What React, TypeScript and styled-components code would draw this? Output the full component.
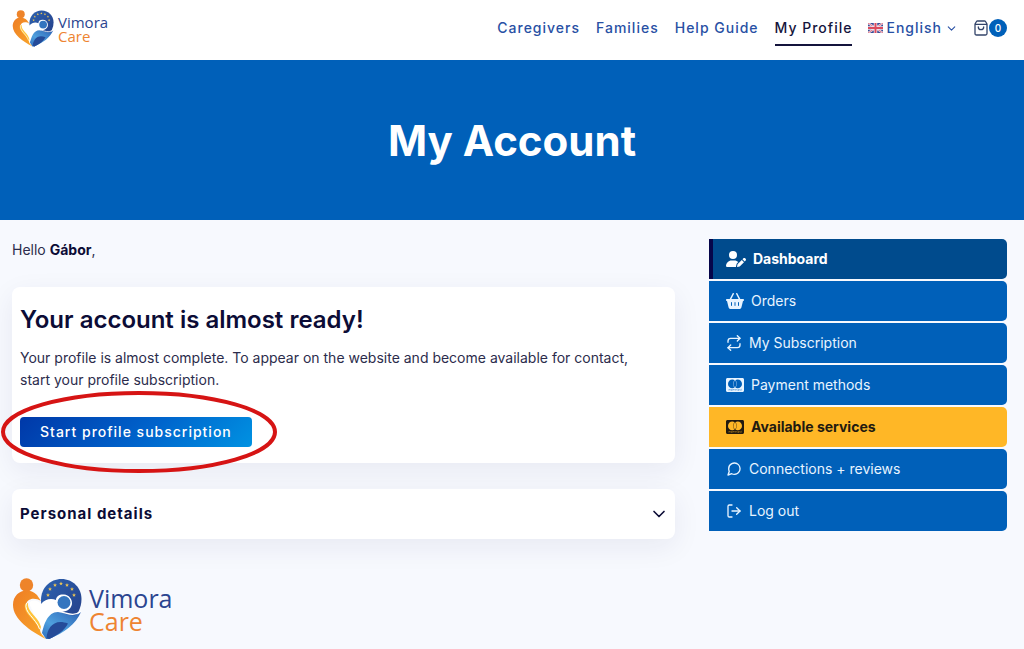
import React, { useId } from 'react';
import styled, { createGlobalStyle, css } from 'styled-components';
import { FaUserPen, FaBasketShopping, FaCcMastercard } from 'react-icons/fa6';
import { FiRepeat, FiMessageCircle, FiLogOut, FiChevronDown } from 'react-icons/fi';

const GlobalStyle = createGlobalStyle`
  *, *::before, *::after { box-sizing: border-box; }
  body {
    margin: 0;
    background: #f7f9fe;
    color: #2c2c4c;
    font-family: Inter, "Liberation Sans", sans-serif;
    font-size: 14px;
    line-height: 22px;
  }
  h1, h2, p, ul { margin: 0; padding: 0; }
  a { color: inherit; text-decoration: none; }
  button { font: inherit; border: 0; cursor: pointer; }
`;

const Header = styled.header`
  display: flex;
  align-items: center;
  justify-content: space-between;
  min-height: 60px;
  padding: 0 17px 4px 12px;
  background: #fff;
`;

const Brand = styled.a<{ $large?: boolean }>`
  display: inline-flex;
  align-items: center;
  gap: ${p => (p.$large ? 7 : 4)}px;
  font-family: "Open Sans", "Noto Sans", sans-serif;
  font-size: ${p => (p.$large ? 25 : 15)}px;
  line-height: ${p => (p.$large ? 23 : 14)}px;
  font-weight: 500;

  svg {
    width: ${p => (p.$large ? 70 : 42)}px;
    height: ${p => (p.$large ? 62 : 37)}px;
  }
`;

const BrandName = styled.span`
  display: flex;
  flex-direction: column;
  padding-top: 2px;
  color: #2b4590;
`;

const BrandAccent = styled.span`
  color: #ee8431;
`;

const Nav = styled.nav`
  display: flex;
  align-items: center;
  gap: 16px;
`;

const navText = css`
  font-size: 14px;
  font-weight: 500;
  letter-spacing: 1px;
  line-height: 32px;
`;

const NavLink = styled.a<{ $active?: boolean }>`
  ${navText}
  color: ${p => (p.$active ? '#14143c' : '#2850a4')};
  border-top: 2px solid transparent;
  border-bottom: 2px solid ${p => (p.$active ? '#14143c' : 'transparent')};
`;

const Language = styled.button`
  ${navText}
  display: flex;
  align-items: center;
  gap: 3px;
  padding: 0;
  background: none;
  color: #2850a4;
`;

const Cart = styled.a`
  display: flex;
  align-items: center;
  gap: 1px;
  color: #33446a;
`;

const Count = styled.span`
  width: 18px;
  height: 18px;
  border-radius: 50%;
  background: #0060b9;
  color: #fff;
  font-size: 10px;
  font-weight: 500;
  line-height: 18px;
  text-align: center;
`;

const Hero = styled.section`
  display: grid;
  place-items: center;
  min-height: 160px;
  padding-top: 2px;
  background: #0060b9;
`;

const Title = styled.h1`
  color: #fff;
  font-size: 42px;
  line-height: 48px;
  font-weight: 700;
`;

const Content = styled.div`
  display: grid;
  grid-template-columns: minmax(0, 1fr) 298px;
  align-items: start;
  gap: 34px;
  padding: 19px 17px 0 12px;
`;

const Main = styled.main`
  display: flex;
  flex-direction: column;
  gap: 26px;
`;

const Strong = styled.strong`
  color: #0c0c36;
  font-weight: 700;
`;

const cardSurface = css`
  border-radius: 8px;
  background: #fff;
  box-shadow: 0 8px 28px rgba(30, 30, 90, 0.07);
`;

const Card = styled.section`
  ${cardSurface}
  padding: 16px 24px 16px 8px;
`;

const CardTitle = styled.h2`
  margin-bottom: 10px;
  color: #0c0c36;
  font-size: 24px;
  line-height: 34px;
  font-weight: 600;
`;

const Action = styled.div`
  position: relative;
  width: fit-content;
  margin-top: 26px;
`;

const StartButton = styled.button`
  display: block;
  height: 30px;
  padding: 0 20px;
  border-radius: 4px;
  background: linear-gradient(135deg, #0038a8 0%, #0064cc 55%, #0092e2 100%);
  color: #fff;
  font-weight: 500;
  letter-spacing: 1px;
`;

const Highlight = styled.svg`
  position: absolute;
  top: -27px;
  left: -20px;
  width: 278px;
  height: 84px;
  pointer-events: none;
`;

const Accordion = styled.button`
  ${cardSurface}
  display: flex;
  align-items: center;
  justify-content: space-between;
  height: 50px;
  padding: 0 6px 0 8px;
  color: #0c0c36;
  font-size: 15px;
  font-weight: 700;
  letter-spacing: 1px;
`;

const Menu = styled.ul`
  display: flex;
  flex-direction: column;
  gap: 2px;
  list-style: none;
`;

type Tone = 'normal' | 'current' | 'accent';

const MenuLink = styled.a<{ $tone: Tone }>`
  display: flex;
  align-items: center;
  gap: 7px;
  height: 40px;
  padding-left: 17px;
  border-radius: 0 5px 5px 0;
  background: #0060b9;
  color: #e8f4ff;

  ${p => p.$tone === 'current' && css`
    padding-left: 13px;
    border-left: 4px solid #06064a;
    background: #004b8d;
    color: #fff;
    font-weight: 700;
  `}
  ${p => p.$tone === 'accent' && css`
    background: #ffb726;
    color: #221a10;
    font-weight: 700;
  `}
`;

const Footer = styled.footer`
  padding: 39px 12px 8px;
`;

function HeartMark() {
  const id = useId();
  return (
    <svg viewBox="0 0 70 62" aria-hidden="true">
      <defs>
        <linearGradient id={id + 'o'} x1="0" y1="0" x2="1" y2="1">
          <stop offset="0" stopColor="#ee7d24" />
          <stop offset="1" stopColor="#f9a72b" />
        </linearGradient>
        <linearGradient id={id + 'b'} x1="0" y1="0" x2="1" y2="1">
          <stop offset="0" stopColor="#2c62b0" />
          <stop offset="1" stopColor="#243a83" />
        </linearGradient>
        <linearGradient id={id + 'l'} x1="1" y1="0" x2="0" y2="1">
          <stop offset="0" stopColor="#2c62b4" />
          <stop offset="0.6" stopColor="#4fa0de" />
          <stop offset="1" stopColor="#2f6fbe" />
        </linearGradient>
      </defs>
      <path d="M29 22C29 10 38 1 49.500 1S69.500 10 69.500 21C69.500 38 53 53 37 61L30 52Z" fill={`url(#${id}b)`} />
      <path d="M17 25C20 21 26 22 29 26 33 21 39 20 44 22 44 18 48 16 52 16.500 57 17 60 21 60 25 60 29 57 32 54 33L42 36 30 54 28 50Z" fill="#fff" />
      <circle cx="52" cy="24.500" r="6.500" fill="#3475bf" />
      <path d="M30 55C32 46 36 33 47 34 54 35 61 41 69 34 64 46 52 55 37 61L34 61Z" fill={`url(#${id}l)`} />
      <path d="M46 33.300C54 34 61 40 69 33" fill="none" stroke="#fff" strokeWidth="1.300" />
      <path d="M34.500 60C35 50 42 40 56 45.500 53 52 46 57 37 61Z" fill="#254b99" />
      <circle cx="14.500" cy="7" r="6.700" fill="#ee842a" />
      <path d="M1 27C1 13 16 8 25 17L29 23C23 19 14 20 14 28 15 35 26 41 28 52 28 55 31 58 34 61 18 53 1 41 1 27Z" fill={`url(#${id}o)`} />
      <path d="M16 25C15 34 27 39 29 49L28 52C24 42 11 36 13 26Z" fill="#ffc43b" />
      <path d="M14.500 25C11 34 24 40 27.500 51" fill="none" stroke="#fff" strokeWidth="1" />
      {[[36, 17], [38, 11], [43, 7], [49, 5.5], [55, 7], [60, 11], [62, 17]].map(([x, y]) => (
        <path key={x} transform={`translate(${x} ${y})`} d="M0-1.900.6-.6 1.900-.5.9.4 1.200 1.700 0 1-1.200 1.700-.9.4-1.900-.5-.6-.6Z" fill="#e8c355" />
      ))}
    </svg>
  );
}

function Logo({ large }: { large?: boolean }) {
  return (
    <Brand href="#" $large={large}>
      <HeartMark />
      <BrandName>
        Vimora
        <BrandAccent>Care</BrandAccent>
      </BrandName>
    </Brand>
  );
}

function UnionFlag() {
  return (
    <svg width="15" height="10" viewBox="0 0 30 20" aria-hidden="true">
      <path fill="#3a4c96" d="M0 0h30v20H0z" />
      <path d="M0 0l30 20M30 0L0 20" stroke="#f4ecf4" strokeWidth="4" />
      <path d="M0 0l30 20M30 0L0 20" stroke="#dc4a5c" strokeWidth="1.500" />
      <path d="M15 0v20M0 10h30" stroke="#f4ecf4" strokeWidth="7" />
      <path d="M15 0v20M0 10h30" stroke="#dc4a5c" strokeWidth="4" />
    </svg>
  );
}

function BagIcon() {
  return (
    <svg width="14" height="16" viewBox="0 0 14 16" fill="none" stroke="currentColor" strokeWidth="1.300" strokeLinecap="round" strokeLinejoin="round" aria-hidden="true">
      <path d="M1 4 2.500 1.500Q2.800 1 3.500 1h7Q11.200 1 11.500 1.500L13 4v9.500Q13 15 11.500 15h-9Q1 15 1 13.500ZM1 4.300h12M4.300 7a2.700 2.700 0 0 0 5.400 0" />
    </svg>
  );
}

const menuItems: { label: string; icon: React.ReactNode; tone?: Tone }[] = [
  { label: 'Dashboard', icon: <FaUserPen size={20} />, tone: 'current' },
  { label: 'Orders', icon: <FaBasketShopping size={18} /> },
  { label: 'My Subscription', icon: <FiRepeat size={16} /> },
  { label: 'Payment methods', icon: <FaCcMastercard size={18} /> },
  { label: 'Available services', icon: <FaCcMastercard size={18} />, tone: 'accent' },
  { label: 'Connections + reviews', icon: <FiMessageCircle size={16} /> },
  { label: 'Log out', icon: <FiLogOut size={16} /> },
];

export default function App() {
  return (
    <>
      <GlobalStyle />
      <Header>
        <Logo />
        <Nav aria-label="Main">
          <NavLink href="#">Caregivers</NavLink>
          <NavLink href="#">Families</NavLink>
          <NavLink href="#">Help Guide</NavLink>
          <NavLink href="#" $active aria-current="page">My Profile</NavLink>
          <Language type="button" aria-haspopup="true">
            <UnionFlag />
            English
            <FiChevronDown size={13} />
          </Language>
          <Cart href="#" aria-label="Cart">
            <BagIcon />
            <Count>0</Count>
          </Cart>
        </Nav>
      </Header>
      <Hero>
        <Title>My Account</Title>
      </Hero>
      <Content>
        <Main>
          <p>Hello <Strong>Gábor</Strong>,</p>
          <Card>
            <CardTitle>Your account is almost ready!</CardTitle>
            <p>
              Your profile is almost complete. To appear on the website and become available for contact,
              start your profile subscription.
            </p>
            <Action>
              <StartButton type="button">Start profile subscription</StartButton>
              <Highlight viewBox="0 0 278 84" aria-hidden="true">
                <ellipse cx="139" cy="42" rx="136" ry="39" fill="none" stroke="#d61414" strokeWidth="4" />
              </Highlight>
            </Action>
          </Card>
          <Accordion type="button" aria-expanded="false">
            Personal details
            <FiChevronDown size={20} />
          </Accordion>
        </Main>
        <nav aria-label="Account">
          <Menu>
            {menuItems.map(({ label, icon, tone = 'normal' }) => (
              <li key={label}>
                <MenuLink href="#" $tone={tone} aria-current={tone === 'current' ? 'page' : undefined}>
                  {icon}
                  {label}
                </MenuLink>
              </li>
            ))}
          </Menu>
        </nav>
      </Content>
      <Footer>
        <Logo large />
      </Footer>
    </>
  );
}
